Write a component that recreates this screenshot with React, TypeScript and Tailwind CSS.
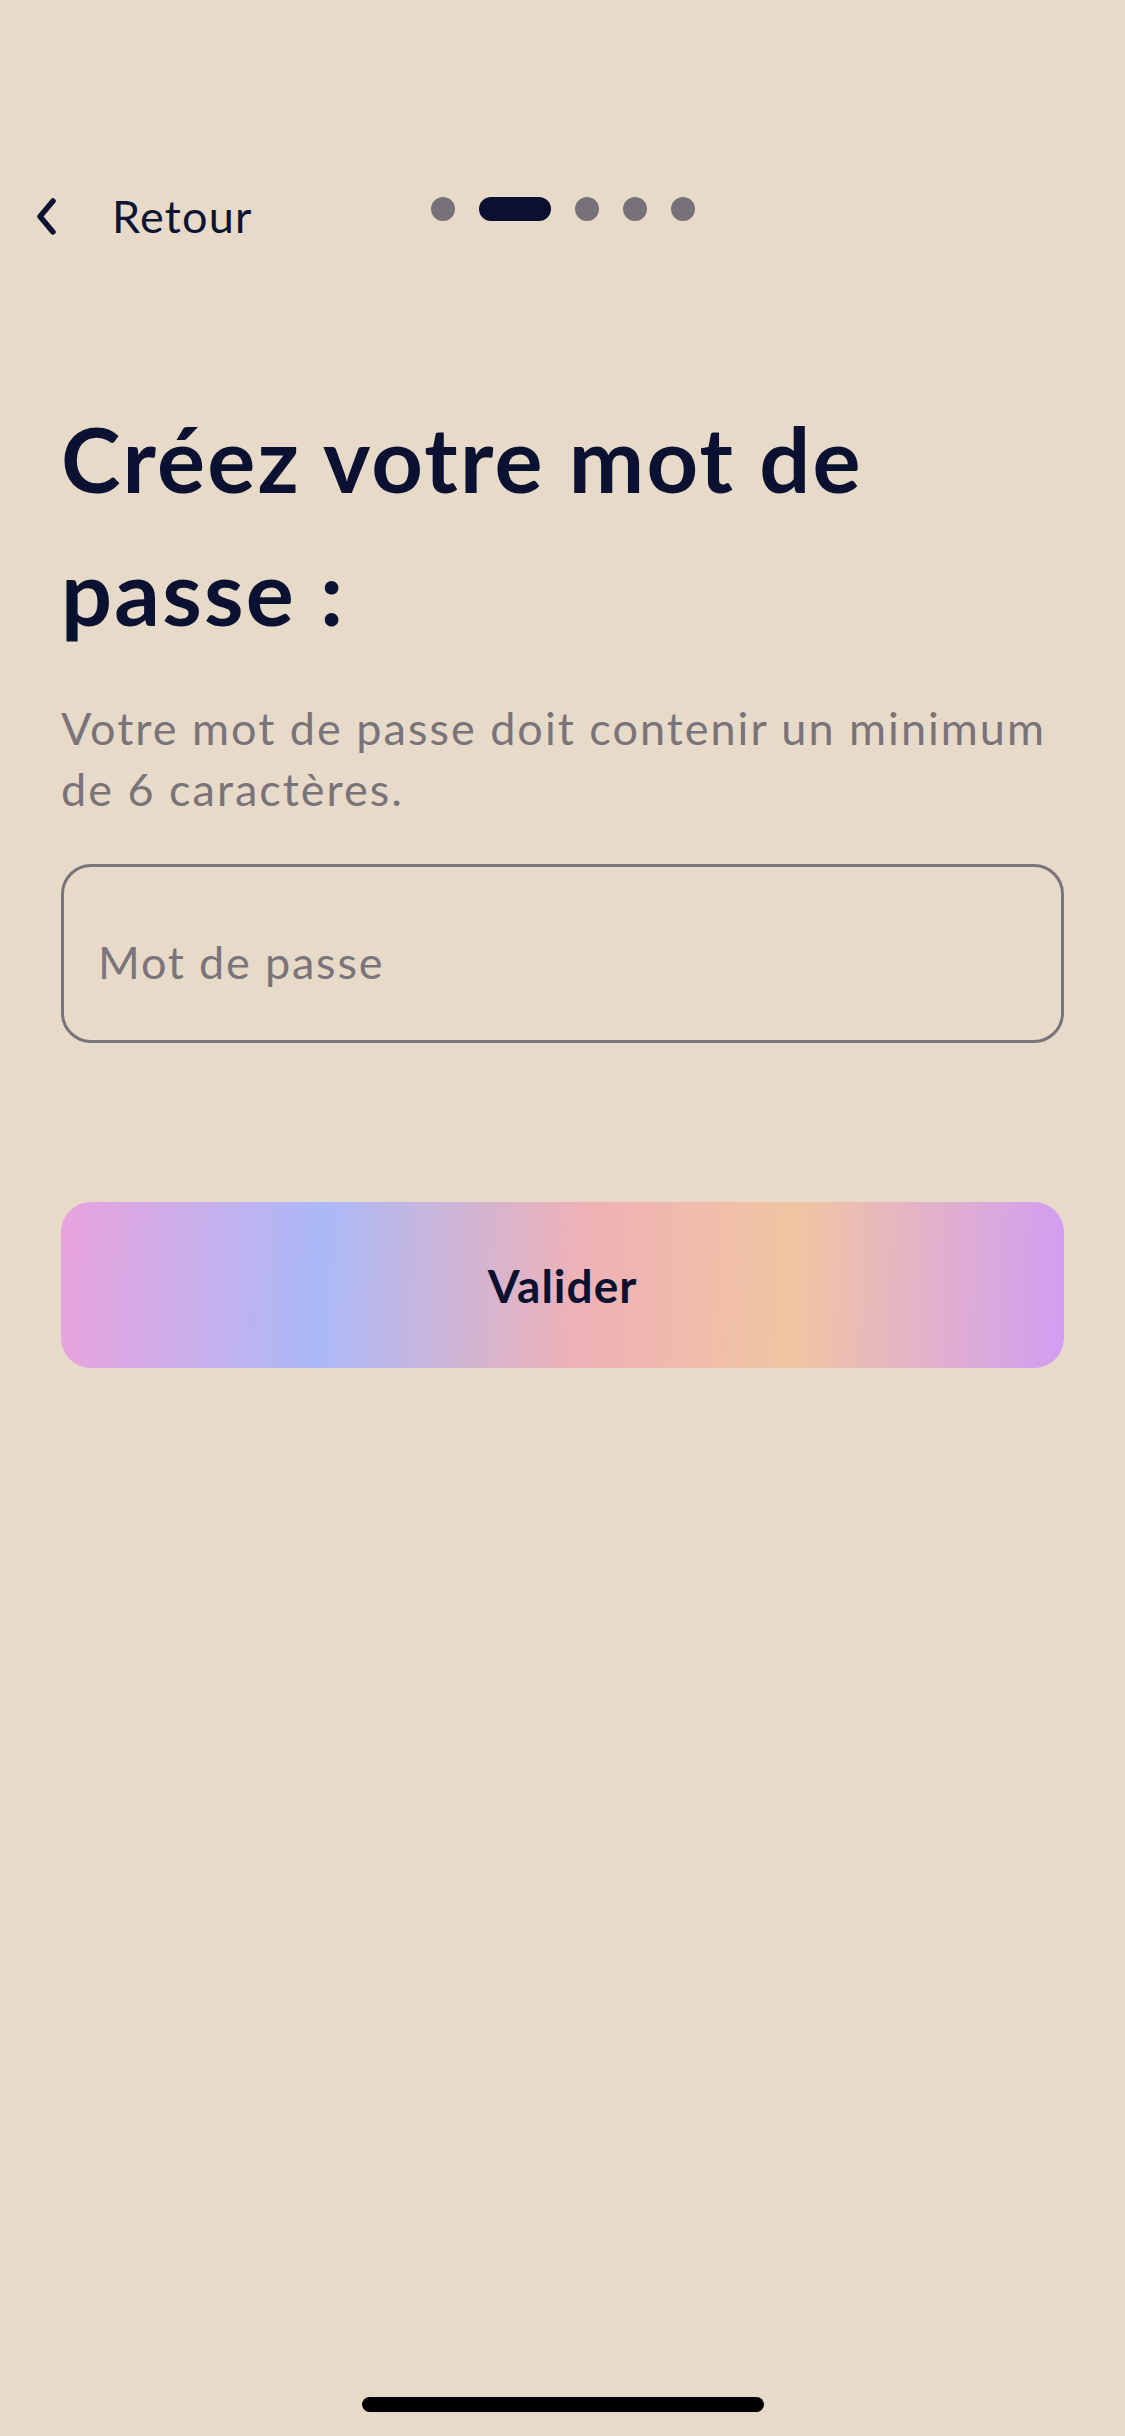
import { useState } from "react";

const Dots = ({ active, count }: { active: number; count: number }) => (
  <div className="flex items-center gap-[24px] mt-[5px]">
    {Array.from({ length: count }).map((_, i) =>
      i === active ? (
        <span key={i} className="h-[24px] w-[72px] rounded-full bg-[#0b1030]" />
      ) : (
        <span key={i} className="h-[24px] w-[24px] rounded-full bg-[#77717a]" />
      )
    )}
  </div>
);

export default function App() {
  const [password, setPassword] = useState("");

  return (
    <div
      className="min-h-[2436px] w-full bg-[#e8dac9] flex flex-col"
      style={{ fontFamily: "Lato, 'Noto Sans', sans-serif" }}
    >
      <header className="grid grid-cols-[1fr_auto_1fr] items-start pt-[192px] px-[35px]">
        <button className="flex items-center h-[48px] gap-[55px] text-[#0d1433]">
          <svg width="22" height="37" viewBox="0 0 22 37" fill="none">
            <path
              d="M18 3 L5 18.5 L18 34"
              stroke="#0b1130"
              strokeWidth="5.5"
              strokeLinecap="round"
              strokeLinejoin="round"
            />
          </svg>
          <span className="text-[45px] leading-[45px] tracking-[1.2px]">Retour</span>
        </button>
        <Dots active={1} count={5} />
        <div />
      </header>

      <main className="flex flex-col px-[61px] pt-[152px]">
        <h1 className="text-[90px] leading-[133px] font-bold text-[#0b1131] tracking-[2.2px]">
          Créez votre mot de passe :
        </h1>
        <p className="mt-[40px] text-[45px] leading-[61px] text-[#7a737a] tracking-[2px]">
          Votre mot de passe doit contenir un minimum de 6 caractères.
        </p>

        <div className="mt-[44px] h-[179px] rounded-[30px] border-[3px] border-[#7a747a] flex items-center pt-[16px] px-[34px]">
          <input
            type="password"
            value={password}
            onChange={(e) => setPassword(e.target.value)}
            placeholder="Mot de passe"
            className="w-full bg-transparent outline-none text-[45px] leading-[54px] tracking-[1.8px] text-[#0b1131] placeholder:text-[#7b747b]"
          />
        </div>

        <button className="mt-[159px] h-[166px] rounded-[30px] flex items-center justify-center bg-[linear-gradient(92deg,#e9a3dd_0%,#abb9f8_26%,#efb1b6_52%,#f1c5a2_73%,#d29df3_100%)]">
          <span className="text-[46px] font-bold text-[#0b1131] tracking-[1px]">Valider</span>
        </button>
      </main>

      <div className="mt-auto flex justify-center pb-[24px]">
        <span className="h-[15px] w-[402px] rounded-full bg-black" />
      </div>
    </div>
  );
}
